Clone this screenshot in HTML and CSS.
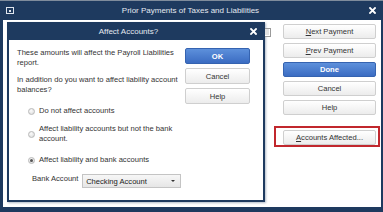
FILE: index.html
```html
<!DOCTYPE html>
<html>
<head>
<meta charset="utf-8">
<link rel="stylesheet" href="styles.css">
</head>
<body>
<div class="window">
  <div class="titlebar">
    <span class="ticon"><span class="ticon-inner"></span></span>
    <span class="ttext">Prior Payments of Taxes and Liabilities</span>
    <svg class="close" width="7" height="7" viewBox="0 0 7 7"><path d="M1 1L6 6M6 1L1 6" stroke="#fff" stroke-width="1.8" stroke-linecap="square"/></svg>
  </div>
  <div class="content">
    <div class="dialog">
      <div class="dtitle">
        <span class="dttext">Affect Accounts?</span>
        <svg class="close" width="7" height="7" viewBox="0 0 7 7"><path d="M1 1L6 6M6 1L1 6" stroke="#fff" stroke-width="1.8" stroke-linecap="square"/></svg>
      </div>
      <div class="dbody">
        <div class="dleft">
          <p class="para">These amounts will affect the Payroll Liabilities report.</p>
          <p class="para">In addition do you want to affect liability account balances?</p>
          <div class="radio r1"><span class="rb"></span><span class="rlabel">Do not affect accounts</span></div>
          <div class="radio r2"><span class="rb"></span><span class="rlabel">Affect liability accounts but not the bank account.</span></div>
          <div class="radio r3"><span class="rb checked"></span><span class="rlabel">Affect liability and bank accounts</span></div>
          <div class="bankrow">
            <span class="blabel">Bank Account</span>
            <div class="select"><span class="stext">Checking Account</span><span class="arrow"></span></div>
          </div>
        </div>
        <div class="dbuttons">
          <div class="btn primary">OK</div>
          <div class="btn">Cancel</div>
          <div class="btn">Help</div>
        </div>
      </div>
    </div>
    <div class="datestub"></div>
    <div class="side">
      <div class="btn sbtn"><span><u>N</u>ext Payment</span></div>
      <div class="btn sbtn"><span><u>P</u>rev Payment</span></div>
      <div class="btn sbtn primary">Done</div>
      <div class="btn sbtn">Cancel</div>
      <div class="btn sbtn">Help</div>
      <div class="highlight">
        <div class="btn sbtn"><span><u>A</u>ccounts Affected...</span></div>
      </div>
    </div>
  </div>
</div>
</body>
</html>
```

FILE: styles.css
```css
html, body {
  margin: 0;
  padding: 0;
  background: #ffffff;
}
body {
  font-family: "Liberation Sans", Arial, sans-serif;
  font-size: 7.6px;
  color: #333;
}
.window {
  width: 383px;
  height: 212px;
  box-sizing: border-box;
  background: #1e3a5f;
  border-top: 1px solid #7f8c9c;
  padding: 0 2px 5px 3px;
  display: flex;
  flex-direction: column;
}
.titlebar {
  height: 19px;
  margin: 0 -2px 0 -3px;
  display: flex;
  align-items: center;
  padding: 0 7px 0 6px;
}
.ticon {
  width: 8px;
  height: 7px;
  box-sizing: border-box;
  border: 1px solid #dfe6ef;
  display: flex;
  align-items: center;
  justify-content: center;
}
.ticon-inner {
  width: 2px;
  height: 2px;
  background: #dfe6ef;
}
.ttext {
  flex: 1;
  text-align: center;
  font-size: 8px;
  color: #e4e9f0;
  padding-right: 2px;
}
.close {
  display: block;
}
.content {
  flex: 1;
  background: #fff;
  display: flex;
  align-items: flex-start;
}
.dialog {
  width: 258px;
  height: 180px;
  box-sizing: border-box;
  margin: 2px 0 0 4px;
  background: #1e3a5f;
  padding: 0 2px 2px 2px;
  display: flex;
  flex-direction: column;
  box-shadow: 1px 1px 2px rgba(30, 58, 95, 0.35);
}
.dtitle {
  height: 18px;
  display: flex;
  align-items: center;
  padding: 0 6px 0 2px;
}
.dttext {
  flex: 1;
  text-align: center;
  font-size: 8px;
  color: #e4e9f0;
  margin-right: 4px;
}
.dbody {
  flex: 1;
  background: #fff;
  display: flex;
  align-items: flex-start;
  padding: 8px 13px 0 8px;
}
.dleft {
  width: 164px;
}
.para {
  margin: 0 0 7px 0;
  line-height: 10px;
}
.radio {
  display: flex;
  align-items: center;
  padding-left: 11px;
  line-height: 10px;
}
.r1 { margin-top: 11px; }
.r2 { margin-top: 8px; }
.r3 { margin-top: 11px; }
.rb {
  flex: none;
  width: 7px;
  height: 7px;
  box-sizing: border-box;
  border-radius: 50%;
  border: 1px solid #b9b9b9;
  background: radial-gradient(circle at 40% 35%, #fbfbfb 0%, #e2e2e2 70%, #d0d0d0 100%);
  margin-right: 4px;
  display: flex;
  align-items: center;
  justify-content: center;
}
.rb.checked::after {
  content: "";
  width: 3px;
  height: 3px;
  border-radius: 50%;
  background: #555;
}
.rlabel {
  width: 138px;
}
.bankrow {
  display: flex;
  align-items: flex-start;
  margin-top: 9px;
  padding-left: 15px;
}
.blabel {
  width: 57px;
  line-height: 10px;
}
.select {
  width: 111px;
  height: 14px;
  box-sizing: border-box;
  border: 1px solid #c4c4c4;
  background: linear-gradient(#f7f7f7, #e6e6e6);
  display: flex;
  align-items: center;
  padding: 0 5px 0 3px;
  color: #222;
}
.stext {
  flex: 1;
}
.arrow {
  width: 0;
  height: 0;
  border-left: 2px solid transparent;
  border-right: 2px solid transparent;
  border-top: 2px solid #333;
}
.dbuttons {
  margin-left: auto;
  width: 65px;
  display: flex;
  flex-direction: column;
  gap: 4px;
}
.btn {
  height: 16px;
  box-sizing: border-box;
  border: 1px solid #cfcfcf;
  border-radius: 2px;
  background: linear-gradient(#ffffff, #ececec);
  display: flex;
  align-items: center;
  justify-content: center;
  color: #333;
}
.btn.primary {
  background: linear-gradient(#5d90db, #3b6cc2);
  border-color: #3563b0;
  color: #fff;
  font-weight: bold;
}
.datestub {
  width: 6px;
  height: 9px;
  box-sizing: border-box;
  margin-top: 8px;
  border: 1px solid #9a9a9a;
  border-left: none;
  background: #e2e2e2;
  box-shadow: inset -1px -1px 0 #fff;
}
.side {
  margin-left: auto;
  margin-right: 5px;
  margin-top: 4px;
  width: 93px;
  display: flex;
  flex-direction: column;
  gap: 4px;
}
.sbtn {
  height: 15px;
}
.highlight {
  margin: 7px -4px 0 -9px;
  border: 2px solid #c1272d;
  padding: 2px 2px 0 7px;
}
u {
  text-decoration: underline;
  text-underline-offset: 1px;
}
```
